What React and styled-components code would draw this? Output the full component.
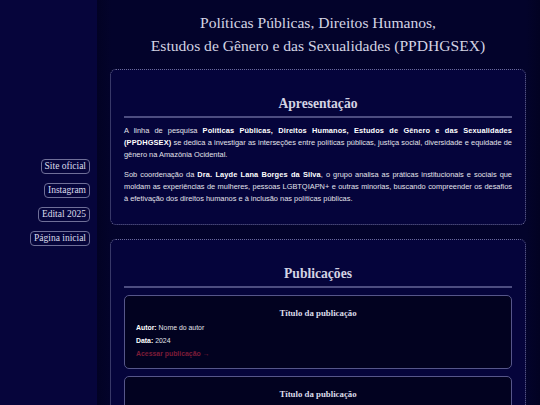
import React from "react";
import styled, { createGlobalStyle } from "styled-components";

const Global = createGlobalStyle`
  html, body { margin: 0; padding: 0; background: #03032b; }
  body { font-family: "Liberation Serif", "Times New Roman", serif; color: #d6d6e6; }
  * { box-sizing: border-box; }
`;

const Layout = styled.div`
  display: flex;
  min-height: 100vh;
`;

const Sidebar = styled.nav`
  width: 97px;
  flex-shrink: 0;
  height: 100vh;
  position: sticky;
  top: 0;
  background: #06053b;
  display: flex;
  flex-direction: column;
  align-items: flex-end;
  justify-content: center;
  gap: 9px;
  padding-right: 7px;
`;

const NavButton = styled.a`
  display: block;
  font-family: "Liberation Serif", "Times New Roman", serif;
  font-size: 9.5px;
  line-height: 13px;
  color: #dcdcec;
  border: 1px solid #6f6f98;
  border-radius: 4px;
  padding: 0 3px;
  text-decoration: none;
`;

const Main = styled.main`
  flex: 1;
  padding: 0 14px 20px 13px;
  background: linear-gradient(to right, #020224 0px, #03032b 14px, #03032b calc(100% - 14px), #020222 100%);
`;

const Header = styled.header`
  text-align: center;
  padding: 11px 0 12px;
`;

const Title = styled.h1`
  margin: 0;
  font-weight: normal;
  font-size: 15.6px;
  line-height: 23px;
  color: #d3d3e3;
`;

const Section = styled.section`
  background: #05043b;
  border: 1px dotted #6c6c96;
  border-radius: 6px;
  padding: 25px 13px 19px;
  margin-bottom: 14px;
`;

const SectionTitle = styled.h2`
  margin: 0 0 7px;
  text-align: center;
  font-size: 13.6px;
  line-height: 18px;
  font-weight: bold;
  color: #d3d3e3;
  padding-bottom: 3px;
  border-bottom: 2px solid #4d4d80;
`;

const Paragraph = styled.p`
  margin: 0 0 8px;
  font-family: "Liberation Sans", Arial, sans-serif;
  font-size: 7.42px;
  line-height: 12px;
  text-align: justify;
  color: #e2e2ea;
  strong { color: #ffffff; letter-spacing: 0.12px; }
  &:last-child { margin-bottom: 0; }
`;

const PubList = styled.div`
  display: flex;
  flex-direction: column;
  gap: 7px;
`;

const PubCard = styled.article`
  background: #020220;
  border: 1px solid #56568a;
  border-radius: 5px;
  padding: 11px 11px 8px;
`;

const PubTitle = styled.h3`
  margin: 0 0 1px;
  text-align: center;
  font-size: 8.8px;
  line-height: 13px;
  font-weight: bold;
  color: #dcdcea;
`;

const PubLine = styled.p`
  margin: 0;
  font-family: "Liberation Sans", Arial, sans-serif;
  font-size: 6.9px;
  line-height: 13px;
  color: #e2e2ea;
  strong { color: #ffffff; }
`;

const PubLink = styled.a`
  display: block;
  font-family: "Liberation Sans", Arial, sans-serif;
  font-size: 6.9px;
  line-height: 13px;
  font-weight: bold;
  color: #7c1c38;
  text-decoration: none;
`;

const pubs = [
  { title: "Título da publicação", author: "Nome do autor", date: "2024" },
  { title: "Título da publicação", author: "Nome do autor", date: "2024" },
];

export default function App() {
  return (
    <>
      <Global />
      <Layout>
        <Sidebar>
          <NavButton href="#">Site oficial</NavButton>
          <NavButton href="#">Instagram</NavButton>
          <NavButton href="#">Edital 2025</NavButton>
          <NavButton href="#">Página inicial</NavButton>
        </Sidebar>
        <Main>
          <Header>
            <Title>
              Políticas Públicas, Direitos Humanos,
              <br />
              Estudos de Gênero e das Sexualidades (PPDHGSEX)
            </Title>
          </Header>
          <Section>
            <SectionTitle>Apresentação</SectionTitle>
            <Paragraph>
              A linha de pesquisa <strong>Políticas Públicas, Direitos Humanos, Estudos de Gênero e das Sexualidades (PPDHGSEX)</strong> se dedica a investigar as interseções entre políticas públicas, justiça social, diversidade e equidade de gênero na Amazônia Ocidental.
            </Paragraph>
            <Paragraph>
              Sob coordenação da <strong>Dra. Layde Lana Borges da Silva</strong>, o grupo analisa as práticas institucionais e sociais que moldam as experiências de mulheres, pessoas LGBTQIAPN+ e outras minorias, buscando compreender os desafios à efetivação dos direitos humanos e à inclusão nas políticas públicas.
            </Paragraph>
          </Section>
          <Section>
            <SectionTitle>Publicações</SectionTitle>
            <PubList>
              {pubs.map((p, i) => (
                <PubCard key={i}>
                  <PubTitle>{p.title}</PubTitle>
                  <PubLine><strong>Autor:</strong> {p.author}</PubLine>
                  <PubLine><strong>Data:</strong> {p.date}</PubLine>
                  <PubLink href="#">Acessar publicação →</PubLink>
                </PubCard>
              ))}
            </PubList>
          </Section>
        </Main>
      </Layout>
    </>
  );
}
